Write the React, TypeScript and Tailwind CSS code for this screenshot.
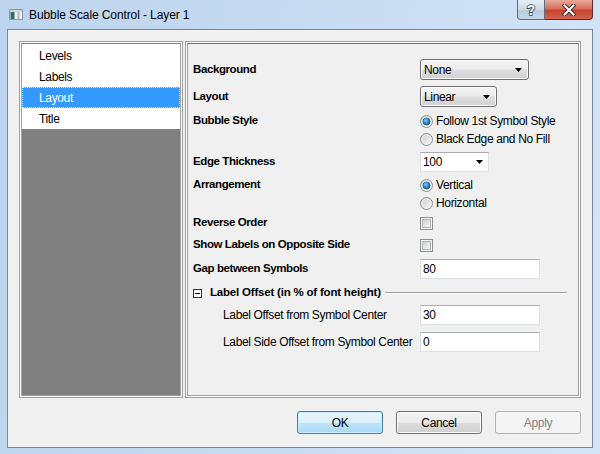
import React from "react";

function Arrow() {
  return (
    <svg width="7" height="4" viewBox="0 0 7 4" className="shrink-0">
      <path d="M0 0H7L3.5 4Z" fill="#000" />
    </svg>
  );
}

function Radio({ checked }: { checked?: boolean }) {
  return (
    <svg width="13" height="13" viewBox="0 0 13 13" className="shrink-0">
      <defs>
        <linearGradient id="rbg" x1="0" y1="0" x2="1" y2="1">
          <stop offset="0" stopColor="#c9cbcd" />
          <stop offset="1" stopColor="#fbfbfb" />
        </linearGradient>
        <radialGradient id="rdot" cx="0.4" cy="0.35" r="0.7">
          <stop offset="0" stopColor="#8fd4f7" />
          <stop offset="0.5" stopColor="#2a8ed1" />
          <stop offset="1" stopColor="#10508a" />
        </radialGradient>
      </defs>
      <circle cx="6.5" cy="6.5" r="6" fill="url(#rbg)" stroke="#8e8f8f" />
      <circle cx="6.5" cy="6.5" r="4.5" fill="none" stroke="#f4f4f4" strokeWidth="0.8" />
      {checked && <circle cx="6.5" cy="6.5" r="3.6" fill="url(#rdot)" stroke="#1a5a8a" strokeWidth="0.6" />}
    </svg>
  );
}

function Check() {
  return (
    <div className="w-[13px] h-[13px] shrink-0 border border-[#8e8f8f] bg-[#f4f4f4] p-[1px]">
      <div className="w-full h-full border border-[#b2b6bb] bg-[linear-gradient(135deg,#cfd2d6,#f5f5f5)]" />
    </div>
  );
}

function Label({ children, w = "w-[227px]" }: { children: React.ReactNode; w?: string }) {
  return <div className={`${w} shrink-0 font-bold text-[11.5px] tracking-[-0.4px]`}>{children}</div>;
}

function Input({ value }: { value: string }) {
  return (
    <div className="w-[120px] h-[20px] bg-white border border-[#dbdfe6] border-t-[#abadb3] flex items-center pl-[2px] tracking-[-0.35px]">
      {value}
    </div>
  );
}

function BtnCombo({ w, value }: { w: string; value: string }) {
  return (
    <div
      className={`${w} h-[21px] rounded-[3px] border border-[#707070] bg-[linear-gradient(#f4f4f4,#ececec_45%,#dedede_55%,#d0d0d0)] shadow-[inset_0_0_0_1px_#fbfbfb] flex items-center pl-[3px] pr-[6px]`}
    >
      <span className="flex-1 tracking-[-0.35px]">{value}</span>
      <Arrow />
    </div>
  );
}

export default function App() {
  return (
    <div className="w-[600px] h-[454px] overflow-hidden flex flex-col bg-[linear-gradient(100deg,#bcd4ee,#c8dcf2_50%,#d4e5f7)] font-['Liberation_Sans',Arial,sans-serif] text-[12px] text-black">
      {/* Title bar */}
      <div className="h-[29px] shrink-0 flex">
        <div className="flex items-center pl-[9px] h-[29px]">
          <svg width="14" height="11" viewBox="0 0 14 11" className="shrink-0">
            <rect x="0.5" y="0.5" width="13" height="10" fill="#eef2f4" stroke="#8e9ca8" />
            <rect x="1" y="1" width="12" height="2" fill="#c9d3da" />
            <rect x="1.5" y="3" width="4" height="7" fill="#2e6a66" />
            <rect x="8.5" y="3" width="2" height="7" fill="#aeb9c2" />
          </svg>
          <span className="ml-[6px] tracking-[-0.1px]">Bubble Scale Control - Layer 1</span>
        </div>
        <div className="ml-auto mr-[7px] flex h-[20px]">
          <div className="w-[28px] h-[20px] border border-t-0 border-[#5d6d80] rounded-bl-[4px] bg-[linear-gradient(#e6eef7,#cbd9e8_50%,#b8cade_51%,#c9d8e8)] flex items-center justify-center">
            <svg width="12" height="14" viewBox="0 0 12 14">
              <text
                x="6"
                y="12"
                textAnchor="middle"
                fontFamily="Liberation Sans, Arial, sans-serif"
                fontWeight="bold"
                fontSize="14"
                fill="#ffffff"
                stroke="#3b4450"
                strokeWidth="1.6"
                paintOrder="stroke"
              >
                ?
              </text>
            </svg>
          </div>
          <div className="w-[48px] h-[20px] border border-t-0 border-l-0 border-[#5a2a24] rounded-br-[4px] bg-[linear-gradient(#e9a99b,#d7705f_45%,#c5412b_55%,#d16450)] flex items-center justify-center">
            <svg width="14" height="12" viewBox="0 0 14 12">
              <path d="M2.5 1.5L11.5 10.5M11.5 1.5L2.5 10.5" stroke="#3a2a28" strokeWidth="4" strokeLinecap="square" />
              <path d="M2.5 1.5L11.5 10.5M11.5 1.5L2.5 10.5" stroke="#ffffff" strokeWidth="2" strokeLinecap="square" />
            </svg>
          </div>
        </div>
      </div>

      {/* Client area */}
      <div className="mx-[7px] h-[419px] shrink-0 border border-[#7b8796] bg-[#f0f0f0] flex flex-col px-[11px] pt-[11px]">
        <div className="flex h-[357px] gap-[2px]">
          {/* List box */}
          <div className="w-[164px] h-full border border-[#a0a0a0] bg-white p-[1px]">
            <div className="w-full h-full border border-[#a0a0a0] border-t-[#828282] bg-[#808080] flex flex-col">
              <div className="bg-white pt-[1px]">
                <div className="h-[21px] flex items-center pl-[17px] tracking-[-0.35px]">Levels</div>
                <div className="h-[21px] flex items-center pl-[17px] tracking-[-0.35px]">Labels</div>
                <div className="h-[21px] flex items-center pl-[16px] tracking-[-0.35px] bg-[#3399ff] text-white border border-dotted border-[#d6eaff]">
                  Layout
                </div>
                <div className="h-[21px] flex items-center pl-[17px] tracking-[-0.35px]">Title</div>
              </div>
            </div>
          </div>

          {/* Right panel */}
          <div className="w-[396px] h-full border border-[#a0a0a0] bg-white p-[1px]">
            <div className="w-full h-full border border-[#a0a0a0] border-t-[#6d6d6d] bg-[#f0f0f0] flex flex-col pl-[5px] pr-[11px] pt-[15px]">
              {/* Background */}
              <div className="h-[21px] flex items-center">
                <Label>Background</Label>
                <BtnCombo w="w-[109px]" value="None" />
              </div>
              {/* Layout */}
              <div className="h-[21px] mt-[6px] flex items-center">
                <Label>Layout</Label>
                <BtnCombo w="w-[77px]" value="Linear" />
              </div>
              {/* Bubble Style */}
              <div className="mt-[5px] flex">
                <div className="h-[18px] flex items-center">
                  <Label>Bubble Style</Label>
                </div>
                <div className="flex flex-col">
                  <div className="h-[18px] flex items-center gap-[3px]">
                    <Radio checked />
                    <span className="tracking-[-0.35px]">Follow 1st Symbol Style</span>
                  </div>
                  <div className="h-[18px] flex items-center gap-[3px]">
                    <Radio />
                    <span className="tracking-[-0.35px]">Black Edge and No Fill</span>
                  </div>
                </div>
              </div>
              {/* Edge Thickness */}
              <div className="h-[21px] mt-[3px] flex items-center">
                <Label>Edge Thickness</Label>
                <div className="w-[69px] h-[20px] bg-white border border-[#dbdfe6] border-t-[#abadb3] flex items-center pl-[2px] pr-[5px]">
                  <span className="flex-1 tracking-[-0.35px]">100</span>
                  <Arrow />
                </div>
              </div>
              {/* Arrangement */}
              <div className="mt-[4px] flex">
                <div className="h-[18px] flex items-center">
                  <Label>Arrangement</Label>
                </div>
                <div className="flex flex-col">
                  <div className="h-[18px] flex items-center gap-[3px]">
                    <Radio checked />
                    <span className="tracking-[-0.35px]">Vertical</span>
                  </div>
                  <div className="h-[18px] flex items-center gap-[3px]">
                    <Radio />
                    <span className="tracking-[-0.35px]">Horizontal</span>
                  </div>
                </div>
              </div>
              {/* Reverse Order */}
              <div className="h-[20px] mt-[1px] flex items-center">
                <Label>Reverse Order</Label>
                <Check />
              </div>
              {/* Show Labels */}
              <div className="h-[20px] mt-[2px] flex items-center">
                <Label>Show Labels on Opposite Side</Label>
                <Check />
              </div>
              {/* Gap */}
              <div className="h-[20px] mt-[4px] flex items-center">
                <Label>Gap between Symbols</Label>
                <Input value="80" />
              </div>
              {/* Group header */}
              <div className="h-[18px] mt-[5px] flex items-center">
                <svg width="9" height="9" viewBox="0 0 9 9" className="shrink-0">
                  <rect x="0.5" y="0.5" width="8" height="8" fill="#ffffff" stroke="#333333" />
                  <path d="M2 4.5H7" stroke="#000" strokeWidth="1" />
                </svg>
                <span className="ml-[8px] font-bold text-[11.5px] tracking-[-0.2px] whitespace-nowrap">
                  Label Offset (in % of font height)
                </span>
                <div className="flex-1 ml-[4px] h-[2px] border-t border-[#a0a0a0] border-b border-b-white" />
              </div>
              {/* Label offset from symbol center */}
              <div className="h-[20px] mt-[3px] flex items-center pl-[30px]">
                <div className="w-[197px] shrink-0 tracking-[-0.35px]">Label Offset from Symbol Center</div>
                <Input value="30" />
              </div>
              {/* Label side offset */}
              <div className="h-[20px] mt-[7px] flex items-center pl-[30px]">
                <div className="w-[197px] shrink-0 tracking-[-0.35px] whitespace-nowrap">Label Side Offset from Symbol Center</div>
                <Input value="0" />
              </div>
            </div>
          </div>
        </div>

        {/* Buttons */}
        <div className="flex justify-end gap-[13px] mt-[13px]">
          <div className="w-[86px] h-[23px] rounded-[3px] border border-[#3c7fb1] bg-[linear-gradient(#eaf6fd,#d9f0fc_50%,#bee6fd_51%,#a7d9f5)] shadow-[inset_0_0_0_1px_#c8ecff] flex items-center justify-center tracking-[-0.35px]">
            OK
          </div>
          <div className="w-[86px] h-[23px] rounded-[3px] border border-[#707070] bg-[linear-gradient(#f2f2f2,#ebebeb_50%,#dddddd_51%,#cfcfcf)] shadow-[inset_0_0_0_1px_#fafafa] flex items-center justify-center tracking-[-0.35px]">
            Cancel
          </div>
          <div className="w-[86px] h-[23px] rounded-[3px] border border-[#adb2b5] bg-[#f4f4f4] text-[#838383] flex items-center justify-center tracking-[-0.35px]">
            Apply
          </div>
        </div>
      </div>
    </div>
  );
}
